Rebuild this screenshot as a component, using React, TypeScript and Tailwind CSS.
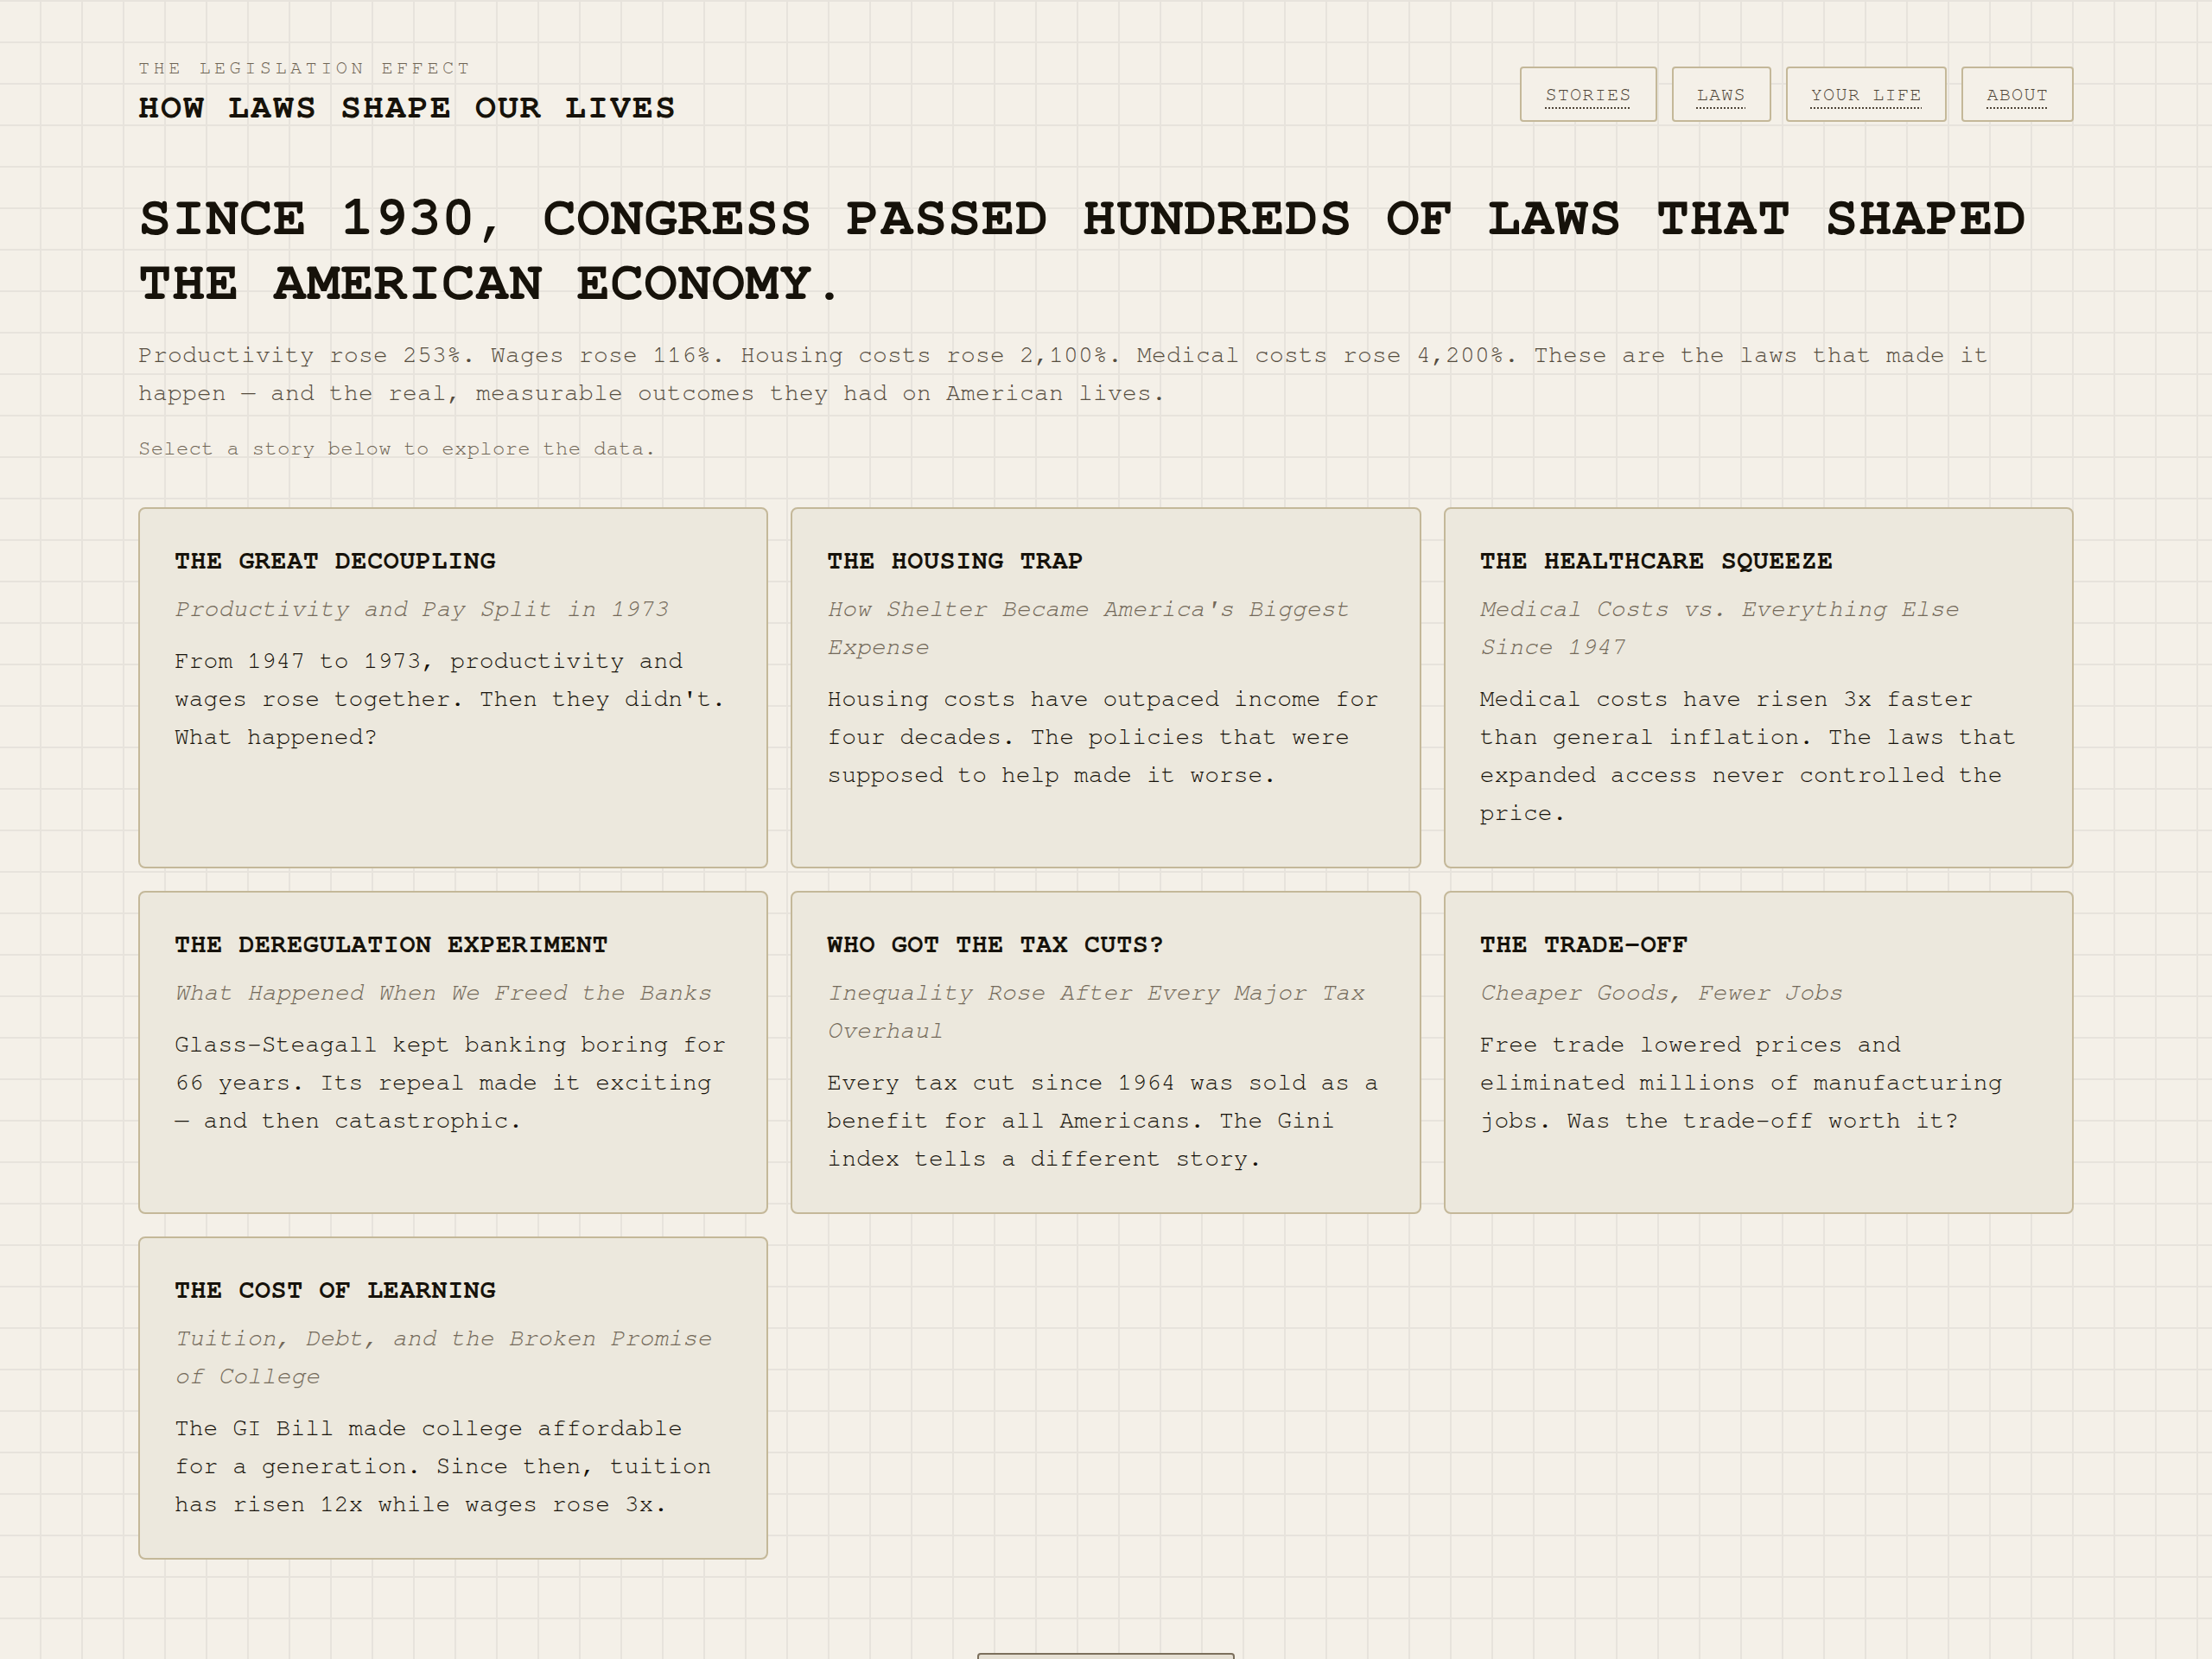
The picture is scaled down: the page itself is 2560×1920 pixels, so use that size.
import React from "react";

type Story = {
  title: string;
  subtitle: string;
  body: string;
};

const stories: Story[] = [
  {
    title: "THE GREAT DECOUPLING",
    subtitle: "Productivity and Pay Split in 1973",
    body: "From 1947 to 1973, productivity and wages rose together. Then they didn't. What happened?",
  },
  {
    title: "THE HOUSING TRAP",
    subtitle: "How Shelter Became America's Biggest Expense",
    body: "Housing costs have outpaced income for four decades. The policies that were supposed to help made it worse.",
  },
  {
    title: "THE HEALTHCARE SQUEEZE",
    subtitle: "Medical Costs vs. Everything Else Since 1947",
    body: "Medical costs have risen 3x faster than general inflation. The laws that expanded access never controlled the price.",
  },
  {
    title: "THE DEREGULATION EXPERIMENT",
    subtitle: "What Happened When We Freed the Banks",
    body: "Glass-Steagall kept banking boring for 66 years. Its repeal made it exciting — and then catastrophic.",
  },
  {
    title: "WHO GOT THE TAX CUTS?",
    subtitle: "Inequality Rose After Every Major Tax Overhaul",
    body: "Every tax cut since 1964 was sold as a benefit for all Americans. The Gini index tells a different story.",
  },
  {
    title: "THE TRADE-OFF",
    subtitle: "Cheaper Goods, Fewer Jobs",
    body: "Free trade lowered prices and eliminated millions of manufacturing jobs. Was the trade-off worth it?",
  },
  {
    title: "THE COST OF LEARNING",
    subtitle: "Tuition, Debt, and the Broken Promise of College",
    body: "The GI Bill made college affordable for a generation. Since then, tuition has risen 12x while wages rose 3x.",
  },
];

const navItems = ["STORIES", "LAWS", "YOUR LIFE", "ABOUT"];

function NavButton({ label }: { label: string }) {
  return (
    <a
      href="#"
      className="block rounded-[4px] border-2 border-[#c4b899] bg-[#f4f0e8] px-[27px] py-[14px] text-[22px] leading-[32px] tracking-[0.05em] text-[#4e4436] underline decoration-dotted decoration-[2px] underline-offset-[8px]"
    >
      {label}
    </a>
  );
}

function StoryCard({ story }: { story: Story }) {
  return (
    <div className="rounded-[8px] border-2 border-[#c4b899] bg-[#ece8dd] p-[40px]">
      <h3 className="text-[30px] font-bold leading-[40px] tracking-[0.02em] text-[#16120a]">
        {story.title}
      </h3>
      <p className="mt-[14px] text-[28px] italic leading-[44px] text-[#736959]">
        {story.subtitle}
      </p>
      <p className="mt-[16px] text-[28px] leading-[44px] text-[#16120a]">
        {story.body}
      </p>
    </div>
  );
}

export default function App() {
  return (
    <div
      className="min-h-screen bg-[#f4f0e8] bg-[linear-gradient(to_right,#e7e3dc_2px,transparent_2px),linear-gradient(to_bottom,#e7e3dc_2px,transparent_2px)] bg-[size:48px_48px] bg-[position:-2px_0] text-[#16120a]"
      style={{
        fontFamily:
          'FreeMono, "Nimbus Mono PS", "Nimbus Mono L", "Liberation Mono", monospace',
      }}
    >
      <div className="mx-auto w-[2240px] pt-[63px] pb-[40px]">
        <header className="flex items-start justify-between">
          <div>
            <div className="text-[22px] leading-[30px] tracking-[0.2em] text-[#6e6454]">
              THE LEGISLATION EFFECT
            </div>
            <h1 className="mt-[7px] text-[40px] font-bold leading-[48px] tracking-[0.05em] text-[#16120a]">
              HOW LAWS SHAPE OUR LIVES
            </h1>
          </div>
          <nav className="mt-[14px] flex items-center gap-[17px]">
            {navItems.map((item) => (
              <NavButton key={item} label={item} />
            ))}
          </nav>
        </header>

        <section className="mt-[67px]">
          <h2 className="text-[64px] font-bold leading-[75px] tracking-[0.01em] text-[#16120a]">
            SINCE 1930, CONGRESS PASSED HUNDREDS OF LAWS THAT SHAPED THE AMERICAN ECONOMY.
          </h2>
          <p className="mt-[24px] text-[28px] leading-[44px] tracking-[0.2px] text-[#554c3e]">
            Productivity rose 253%. Wages rose 116%. Housing costs rose 2,100%. Medical costs rose 4,200%. These are the laws that made it happen — and the real, measurable outcomes they had on American lives.
          </p>
          <p className="mt-[24px] text-[24px] leading-[36px] tracking-[0.01em] text-[#6e6454]">
            Select a story below to explore the data.
          </p>
        </section>

        <section className="mt-[50px] grid grid-cols-3 gap-x-[26px] gap-y-[26px]">
          {stories.map((s) => (
            <StoryCard key={s.title} story={s} />
          ))}
        </section>

        <div className="mt-[108px] flex justify-center">
          <button className="w-[298px] rounded-[4px] border-2 border-[#7b6f5c] bg-[#e6e0d4] px-[28px] py-[16px] text-[22px] tracking-[0.1em] text-[#3a3226]">
            VIEW ALL LAWS
          </button>
        </div>
      </div>
    </div>
  );
}
